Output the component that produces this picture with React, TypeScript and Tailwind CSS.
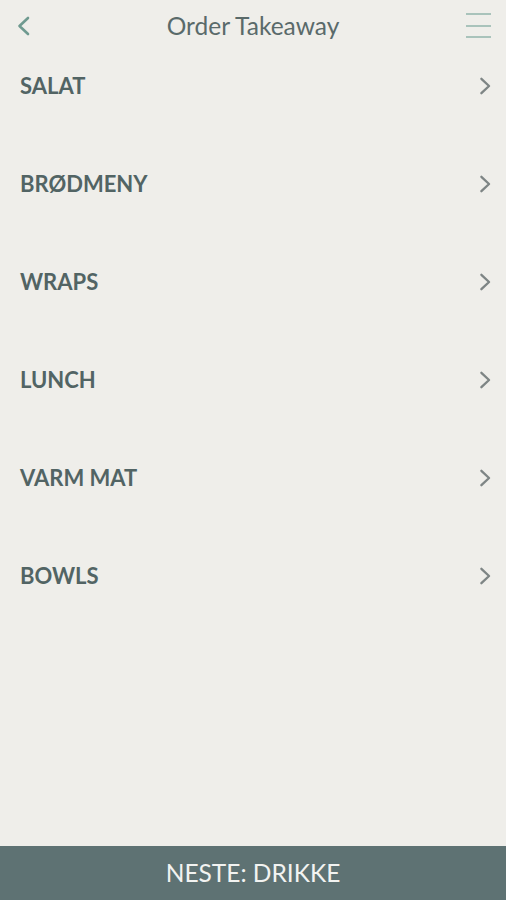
const items = ["SALAT", "BRØDMENY", "WRAPS", "LUNCH", "VARM MAT", "BOWLS"];

const Chevron = ({ className }: { className: string }) => (
  <svg viewBox="0 0 14 20" className={className} fill="none" stroke="currentColor" strokeWidth="2.6" strokeLinecap="round" strokeLinejoin="round">
    <path d="M3 2 L11.5 10 L3 18" />
  </svg>
);

export default function App() {
  return (
    <div className="flex h-[900px] w-[506px] flex-col bg-[#efeeea] font-['Lato',sans-serif]">
      <header className="relative flex h-[52px] items-center justify-center">
        <button className="absolute left-[16px] top-[16px] text-[#6f9a90]">
          <Chevron className="h-[20px] w-[16px] rotate-180" />
        </button>
        <h1 className="text-[24.5px] leading-none text-[#5a6a6a]">Order Takeaway</h1>
        <div className="absolute right-[15px] top-[13px] flex w-[25px] flex-col gap-[9.5px]">
          <span className="h-[2px] bg-[#a9c3bb]"></span>
          <span className="h-[2px] bg-[#a9c3bb]"></span>
          <span className="h-[2px] bg-[#a9c3bb]"></span>
        </div>
      </header>
      <ul className="flex-1">
        {items.map((item, i) => (
          <li key={item} className={`flex h-[98px] items-center justify-between pl-[20px] pr-[14px] ${i === 0 ? "-mt-[15px]" : ""}`}>
            <span className="text-[22px] font-bold leading-none text-[#526464]">{item}</span>
            <Chevron className="h-[18px] w-[14px] text-[#7e8585]" />
          </li>
        ))}
      </ul>
      <footer className="flex h-[54px] items-center justify-center bg-[#5e7273]">
        <span className="text-[24.5px] leading-none text-[#f2f3f1]">NESTE: DRIKKE</span>
      </footer>
    </div>
  );
}
